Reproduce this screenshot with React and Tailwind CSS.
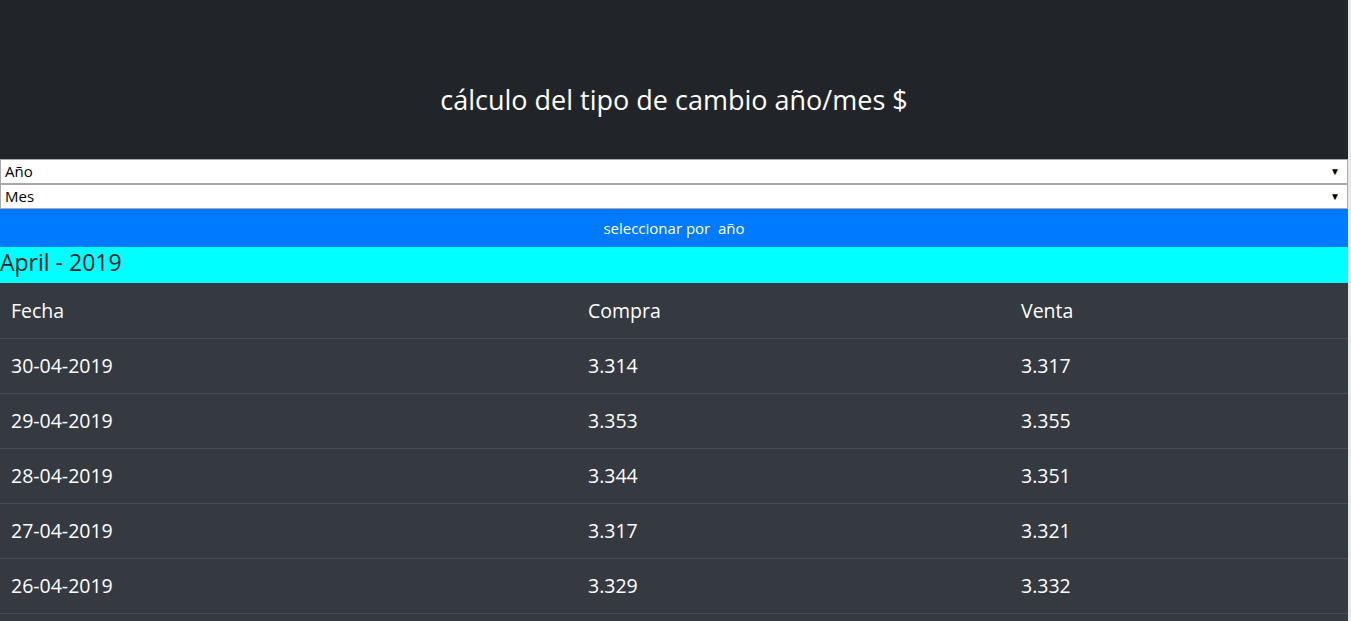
import React from 'react';

const ROWS = [
    { fecha: '30-04-2019', compra: '3.314', venta: '3.317' },
    { fecha: '29-04-2019', compra: '3.353', venta: '3.355' },
    { fecha: '28-04-2019', compra: '3.344', venta: '3.351' },
    { fecha: '27-04-2019', compra: '3.317', venta: '3.321' },
    { fecha: '26-04-2019', compra: '3.329', venta: '3.332' },
];

function Select({ label }) {
    return (
        <div className="h-[25px] shrink-0 bg-white border border-[#a9a9a9] flex items-center justify-between pl-[4px] pr-[7px] text-[15px] text-black">
            <span>{label}</span>
            <span className="text-[10px]">▼</span>
        </div>
    );
}

function Row({ cells, head }) {
    return (
        <div className={`grid grid-cols-[577px_433px_1fr] h-[55px] shrink-0 items-center text-[19.5px] text-white ${head ? '' : 'border-t border-[#454d55]'}`}>
            {cells.map((c, i) => (
                <div key={i} className="px-[11px]">{c}</div>
            ))}
        </div>
    );
}

export default function App() {
    return (
        <div className="h-[621px] overflow-hidden flex font-['Open_Sans',sans-serif]">
            <div className="flex-1 flex flex-col">
                <header className="h-[159px] shrink-0 bg-[#212529] flex items-center justify-center pt-[42px]">
                    <h1 className="text-[27px] text-white">cálculo del tipo de cambio año/mes $</h1>
                </header>
                <Select label="Año" />
                <Select label="Mes" />
                <button className="h-[38px] shrink-0 bg-[#007bff] text-white text-[15px] flex items-center justify-center">
                    seleccionar por&nbsp; año
                </button>
                <div className="h-[36px] shrink-0 bg-[#00ffff] text-[#212529] text-[23px] font-medium flex items-center pb-[5px]">
                    April - 2019
                </div>
                <div className="bg-[#343a40] flex-1 flex flex-col">
                    <Row head cells={['Fecha', 'Compra', 'Venta']} />
                    {ROWS.map(r => (
                        <Row key={r.fecha} cells={[r.fecha, r.compra, r.venta]} />
                    ))}
                    <div className="border-t border-[#454d55]" />
                </div>
            </div>
            <div className="w-[3px] bg-[#e8e8e8]" />
        </div>
    );
}
